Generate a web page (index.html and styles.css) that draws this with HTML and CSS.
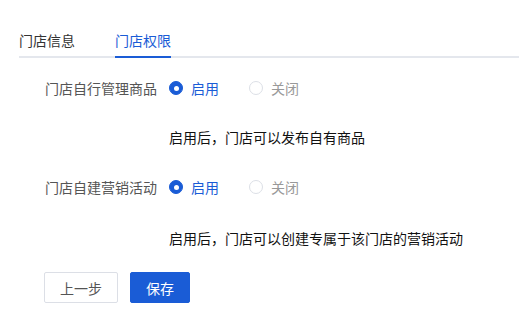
FILE: index.html
```html
<!DOCTYPE html>
<html lang="zh">
<head>
<meta charset="utf-8">
<link rel="stylesheet" href="styles.css">
</head>
<body>
<div class="tabs">
  <div class="tab">门店信息</div>
  <div class="tab active">门店权限</div>
</div>
<div class="form">
  <div class="row">
    <div class="label">门店自行管理商品</div>
    <label class="radio checked"><span class="dot"></span><span class="txt">启用</span></label>
    <label class="radio"><span class="dot"></span><span class="txt">关闭</span></label>
  </div>
  <div class="help h1">启用后，门店可以发布自有商品</div>
  <div class="row r2">
    <div class="label">门店自建营销活动</div>
    <label class="radio checked"><span class="dot"></span><span class="txt">启用</span></label>
    <label class="radio"><span class="dot"></span><span class="txt">关闭</span></label>
  </div>
  <div class="help h2">启用后，门店可以创建专属于该门店的营销活动</div>
  <div class="actions">
    <button class="btn">上一步</button>
    <button class="btn primary">保存</button>
  </div>
</div>
</body>
</html>
```

FILE: styles.css
```css
* { box-sizing: border-box; }
body {
  margin: 0;
  font-family: "Noto Sans CJK SC", "Noto Sans", sans-serif;
  font-size: 14px;
  color: #1f1f1f;
  background: #fff;
}
.tabs {
  display: flex;
  gap: 40px;
  margin-left: 19px;
  padding-top: 30px;
  border-bottom: 2px solid #e4e7ed;
}
.tab {
  line-height: 20px;
  padding-bottom: 6px;
  color: #333;
  margin-bottom: -2px;
  border-bottom: 2px solid transparent;
}
.tab.active {
  color: #1a5cd6;
  border-bottom-color: #1a5cd6;
}
.form {
  padding-left: 45px;
  padding-top: 20px;
}
.row {
  display: flex;
  align-items: center;
  height: 20px;
}
.label {
  width: 112px;
  margin-right: 12px;
  color: #555;
  line-height: 20px;
}
.radio {
  display: flex;
  align-items: center;
  margin-right: 30px;
  color: #999;
  line-height: 20px;
}
.dot {
  width: 14px;
  height: 14px;
  border-radius: 50%;
  border: 1px solid #dcdfe6;
  margin-right: 8px;
  position: relative;
}
.radio.checked { color: #1a5cd6; }
.radio.checked .dot {
  background: #1a5cd6;
  border-color: #1a5cd6;
}
.radio.checked .dot::after {
  content: "";
  position: absolute;
  left: 50%;
  top: 50%;
  width: 5px;
  height: 5px;
  margin: -2.5px 0 0 -2.5px;
  border-radius: 50%;
  background: #fff;
}
.help {
  margin-left: 124px;
  line-height: 20px;
  color: #111;
}
.h1 { margin-top: 29px; }
.r2 { margin-top: 30px; }
.h2 { margin-top: 31px; }
.actions {
  display: flex;
  gap: 12px;
  margin-top: 24px;
  margin-left: -1px;
}
.btn {
  height: 31px;
  width: 74px;
  border: 1px solid #dcdfe6;
  border-radius: 2px;
  background: #fff;
  color: #555;
  font-family: inherit;
  font-size: 14px;
  padding: 0;
}
.btn.primary {
  width: 60px;
  background: #1a5cd6;
  border-color: #1a5cd6;
  color: #fff;
}
```
